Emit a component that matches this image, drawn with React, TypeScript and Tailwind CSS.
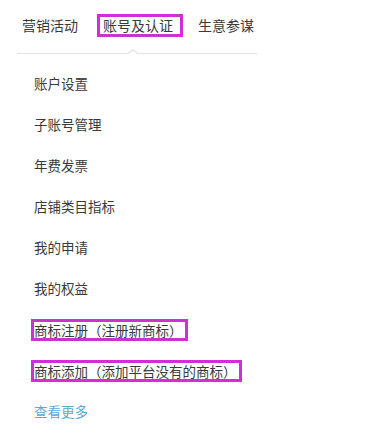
import React from 'react';

const items = [
  { label: '账户设置' },
  { label: '子账号管理' },
  { label: '年费发票' },
  { label: '店铺类目指标' },
  { label: '我的申请' },
  { label: '我的权益' },
  { label: '商标注册（注册新商标）', marked: true },
  { label: '商标添加（添加平台没有的商标）', marked: true },
];

export default function App() {
  return (
    <div
      className="w-[367px] h-[433px] bg-white text-[#3a3a3a] text-[13.5px] overflow-hidden"
      style={{ fontFamily: '"Microsoft YaHei", "Noto Sans CJK SC", sans-serif' }}
    >
      {/* Tabs */}
      <div className="flex items-center pl-[22px] pt-[14px] h-[37px] text-[14px]">
        <span className="leading-[23px]">营销活动</span>
        <span className="ml-[19px] border-[3px] border-[#d02fd4] pl-[3px] pr-[7px] leading-[17px] h-[23px]">
          账号及认证
        </span>
        <span className="ml-[15px] leading-[23px]">生意参谋</span>
      </div>

      {/* Divider with caret */}
      <div className="relative ml-[17px] w-[240px] h-[26px]">
        <svg className="absolute left-0 top-[12px]" width="240" height="6" viewBox="0 0 240 6">
          <path d="M0 4.5 H111 L116 1 L121 4.5 H240" fill="none" stroke="#e2e2e2" strokeWidth="1.2" />
        </svg>
      </div>

      {/* Menu list */}
      <ul className="pl-[31px]">
        {items.map((it) => (
          <li key={it.label} className="h-[41px] flex items-center">
            {it.marked ? (
              <span className="border-[3px] border-[#d02fd4] pr-[2px] h-[22px] leading-[16px]">
                {it.label}
              </span>
            ) : (
              <span className="pl-[3px]">{it.label}</span>
            )}
          </li>
        ))}
        <li className="h-[41px] flex items-center">
          <span className="pl-[3px] text-[#5aaad6]">查看更多</span>
        </li>
      </ul>
    </div>
  );
}
